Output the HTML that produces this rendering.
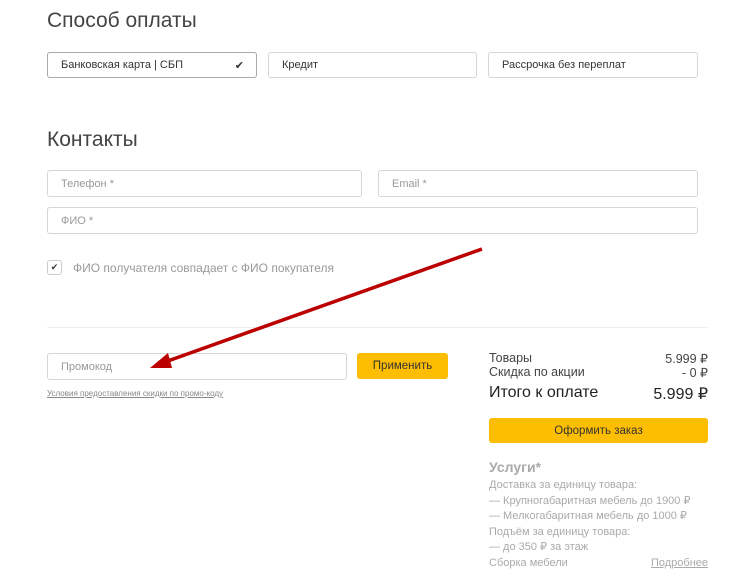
<!DOCTYPE html>
<html><head><meta charset="utf-8"><style>
*{margin:0;padding:0;box-sizing:border-box}
body{width:752px;height:577px;background:#fff;font-family:"Liberation Sans",sans-serif;position:relative;overflow:hidden;color:#333}
.a{position:absolute}
.box{position:absolute;border:1px solid #d6d6d6;border-radius:3px;font-size:11px;color:#333;padding-left:13px;display:flex;align-items:center}
.ph{color:#999}
.r{position:absolute;left:489px;width:219px;font-size:11px;color:#aaa}
</style></head><body>
<div class="a" style="left:47px;top:9px;font-size:21px;color:#444">Способ оплаты</div>
<div class="box" style="left:47px;top:52px;width:210px;height:26px;border-color:#aaa">Банковская карта | СБП<span style="position:absolute;right:12px;font-size:11px">✔</span></div>
<div class="box" style="left:268px;top:52px;width:209px;height:26px">Кредит</div>
<div class="box" style="left:488px;top:52px;width:210px;height:26px">Рассрочка без переплат</div>
<div class="a" style="left:47px;top:128px;font-size:21px;color:#444">Контакты</div>
<div class="box ph" style="left:47px;top:170px;width:315px;height:27px">Телефон *</div>
<div class="box ph" style="left:378px;top:170px;width:320px;height:27px">Email *</div>
<div class="box ph" style="left:47px;top:207px;width:651px;height:27px">ФИО *</div>
<div class="a" style="left:47px;top:260px;width:15px;height:15px;border:1px solid #ccc;border-radius:3px;font-size:9px;text-align:center;line-height:13px">✔</div>
<div class="a" style="left:73px;top:261px;font-size:12px;color:#999">ФИО получателя совпадает с ФИО покупателя</div>
<div class="a" style="left:47px;top:327px;width:661px;height:1px;background:#eee"></div>
<div class="box ph" style="left:47px;top:353px;width:300px;height:27px">Промокод</div>
<div class="a" style="left:357px;top:353px;width:91px;height:26px;background:#fdbd00;border-radius:3px;font-size:11.5px;text-align:center;line-height:27px;color:#333">Применить</div>
<div class="a" style="left:47px;top:389px;font-size:8px;color:#888;text-decoration:underline">Условия предоставления скидки по промо-коду</div>
<div class="r" style="top:351px;color:#444;font-size:12.5px">Товары<span style="float:right">5.999 ₽</span></div>
<div class="r" style="top:365px;color:#444;font-size:12.5px">Скидка по акции<span style="float:right">- 0 ₽</span></div>
<div class="r" style="top:384px;color:#222;font-size:16px">Итого к оплате<span style="float:right">5.999 ₽</span></div>
<div class="a" style="left:489px;top:418px;width:219px;height:25px;background:#fdbd00;border-radius:3px;font-size:11.5px;text-align:center;line-height:26px;color:#333">Оформить заказ</div>
<div class="r" style="top:459px;font-size:14px;font-weight:bold;color:#aaa">Услуги*</div>
<div class="r" style="top:478px;line-height:15.6px">Доставка за единицу товара:<br>— Крупногабаритная мебель до 1900 ₽<br>— Мелкогабаритная мебель до 1000 ₽<br>Подъём за единицу товара:<br>— до 350 ₽ за этаж<br>Сборка мебели<span style="float:right;text-decoration:underline">Подробнее</span></div>
<svg class="a" style="left:0;top:0" width="752" height="577"><line x1="482" y1="249" x2="165" y2="362" stroke="#b00" stroke-width="3.5"/><polygon points="150,368 168,353 172,368" fill="#b00"/></svg>
</body></html>
